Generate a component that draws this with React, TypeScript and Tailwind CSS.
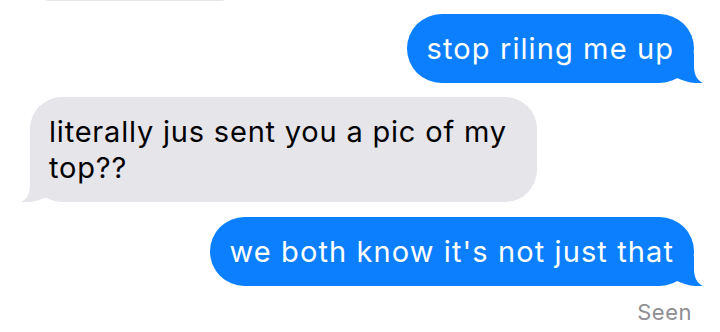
import React from "react";

function Tail({ color, side }: { color: string; side: "left" | "right" }) {
  return (
    <svg
      width="30"
      height="30"
      viewBox="0 0 30 30"
      className={
        side === "right"
          ? "absolute bottom-0 right-[-9px]"
          : "absolute bottom-0 left-[-9px] -scale-x-100"
      }
    >
      <path
        d="M21 0 L21 13 C21 22 24.5 27.5 30 30 C22 30.8 12 29 4 25 L0 26.5 L0 0 Z"
        fill={color}
      />
    </svg>
  );
}

export default function App() {
  return (
    <div
      className="w-[720px] h-[332px] overflow-hidden bg-white flex flex-col pl-[30px] pr-[26px]"
      style={{ fontFamily: "Inter, 'Liberation Sans', sans-serif" }}
    >
      {/* previous bubble, mostly scrolled off */}
      <div className="self-start mt-[-40px] h-[41px] w-[210px] rounded-[30px] bg-[#e5e5ea]" />

      <div className="self-end mt-[13px] relative">
        <div className="rounded-[35px] bg-[#0b7ffe] px-[20px] py-[17px] text-[29px] leading-[35px] tracking-[1.1px] text-white">
          stop riling me up
        </div>
        <Tail color="#0b7ffe" side="right" />
      </div>

      <div className="self-start mt-[14px] relative">
        <div className="max-w-[507px] rounded-[32px] bg-[#e5e5ea] px-[19px] py-[17px] text-[29px] leading-[35.5px] tracking-[0.8px] text-black">
          literally jus sent you a pic of my top??
        </div>
        <Tail color="#e5e5ea" side="left" />
      </div>

      <div className="self-end mt-[15px] relative">
        <div className="rounded-[35px] bg-[#0b7ffe] px-[20px] py-[17px] text-[29px] leading-[35px] tracking-[1.1px] text-white">
          we both know it's not just that
        </div>
        <Tail color="#0b7ffe" side="right" />
      </div>

      <div className="self-end mt-[13px] mr-[2px] text-[22px] leading-[26px] tracking-[0.5px] text-[#8e8e93]">
        Seen
      </div>
    </div>
  );
}
